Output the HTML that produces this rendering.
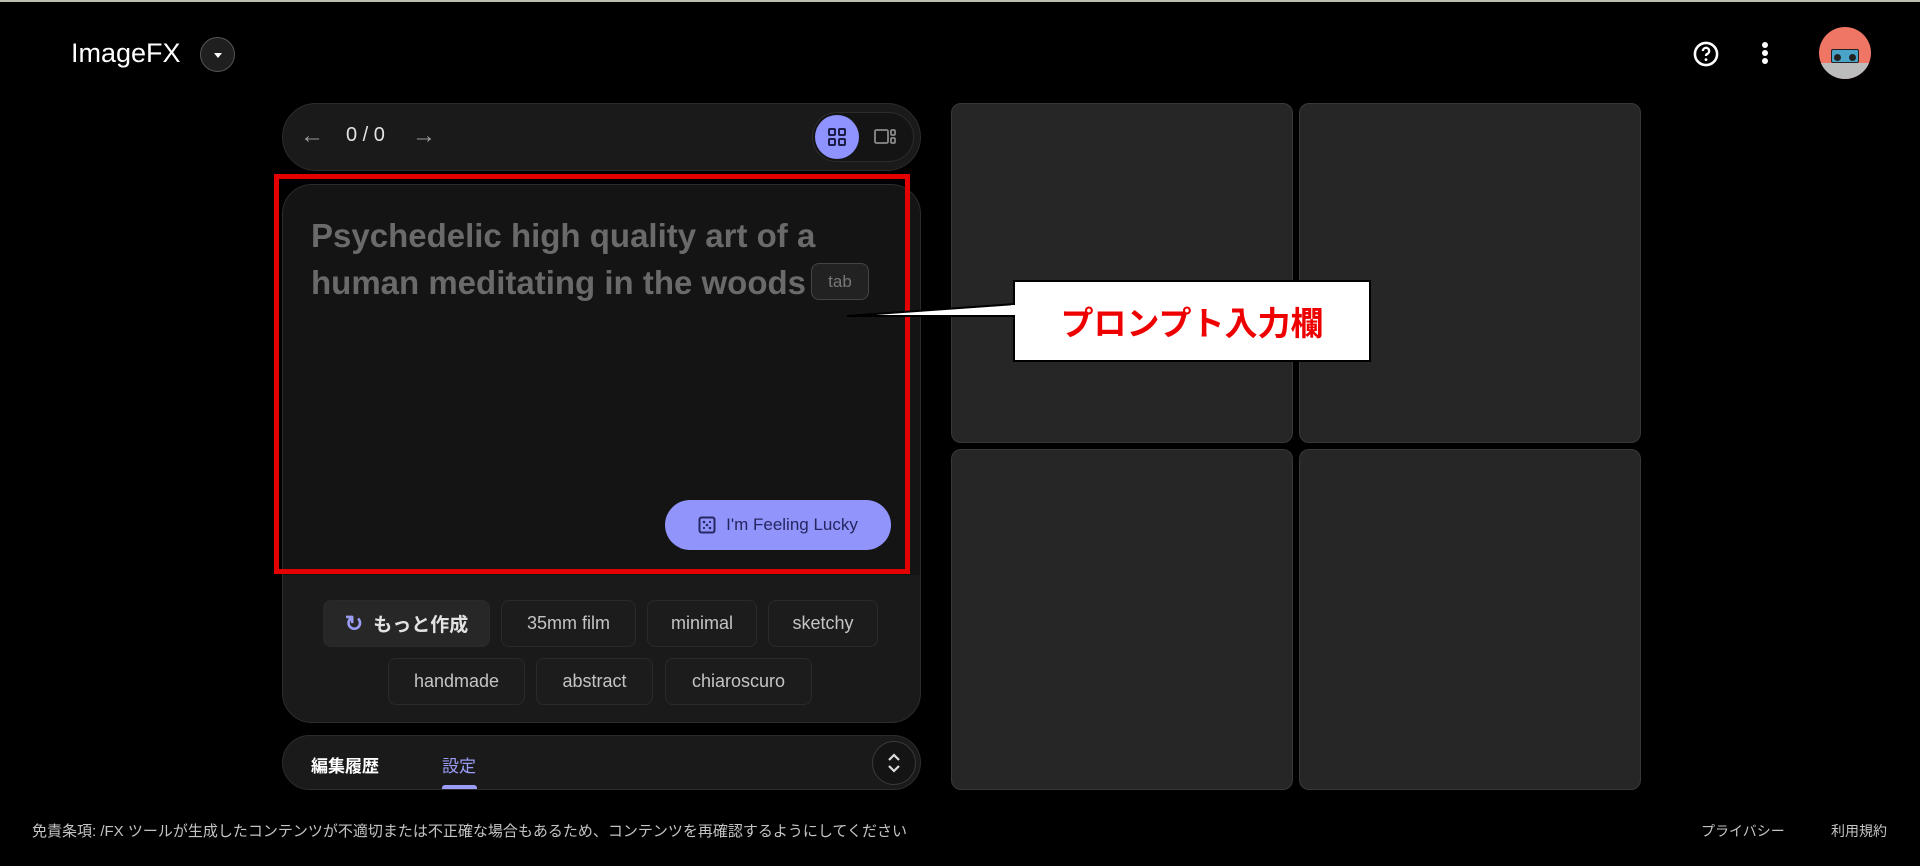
<!DOCTYPE html>
<html><head><meta charset="utf-8"><style>
*{box-sizing:border-box;margin:0;padding:0}
body{width:1920px;height:866px;background:#000;position:relative;overflow:hidden;font-family:"Liberation Sans","Noto Sans CJK JP",sans-serif;color:#e3e3e3}
.a{position:absolute}
.chip{position:absolute;height:47px;border:1px solid #2a2a2a;background:#1c1c1c;border-radius:8px;color:#c4c4c4;font-size:18px;display:flex;align-items:center;justify-content:center}
.tile{position:absolute;background:#262626;border:1px solid #383838;border-radius:10px}
</style></head><body>
<div class="a" style="left:0;top:0;width:1920px;height:2px;background:#bdbdb0"></div>
<div class="a" style="left:71px;top:38px;font-size:27px;color:#fff">ImageFX</div>
<div class="a" style="left:200px;top:37px;width:35px;height:35px;border-radius:50%;background:#1f1f1f;border:1px solid #555"><div class="a" style="left:13px;top:15px;border-left:4px solid transparent;border-right:4px solid transparent;border-top:5px solid #fff"></div></div>
<svg class="a" style="left:1692px;top:40px" width="28" height="28" viewBox="0 0 24 24"><circle cx="12" cy="12" r="9.5" fill="none" stroke="#fff" stroke-width="2.2"/><path d="M9.3 9.5a2.7 2.7 0 1 1 3.8 2.4c-.8.4-1.1.9-1.1 1.8" fill="none" stroke="#fff" stroke-width="2"/><circle cx="12" cy="16.8" r="1.2" fill="#fff"/></svg>
<div class="a" style="left:1762px;top:42px;width:6px;height:6px;border-radius:50%;background:#fff;box-shadow:0 8px 0 #fff,0 16px 0 #fff"></div>
<div class="a" style="left:1819px;top:27px;width:52px;height:52px;border-radius:50%;overflow:hidden;background:#ef7565">
<div class="a" style="left:0;top:36px;width:52px;height:16px;background:#bcbcbc"></div>
<div class="a" style="left:12px;top:22px;width:28px;height:14px;background:#4aa3c8;border-radius:2px;border:1px solid #222"></div>
<div class="a" style="left:15px;top:27px;width:7px;height:7px;border-radius:50%;background:#222"></div>
<div class="a" style="left:30px;top:27px;width:7px;height:7px;border-radius:50%;background:#222"></div></div>

<div class="a" style="left:282px;top:103px;width:639px;height:68px;border-radius:34px;background:#1a1a1a;border:1px solid #2c2c2c"></div>
<div class="a" style="left:300px;top:122px;font-size:24px;color:#9a9a9a">←</div>
<div class="a" style="left:346px;top:124px;font-size:20px;color:#e3e3e3">0 / 0</div>
<div class="a" style="left:412px;top:122px;font-size:24px;color:#9a9a9a">→</div>
<div class="a" style="left:812px;top:112px;width:102px;height:50px;border-radius:25px;border:1px solid #2c2c2c;background:#141414"></div>
<div class="a" style="left:815px;top:115px;width:44px;height:44px;border-radius:50%;background:#8e93ff"></div>
<svg class="a" style="left:826px;top:126px" width="22" height="22" viewBox="0 0 22 22" fill="none" stroke="#1d1d4a" stroke-width="2"><rect x="3" y="3" width="6" height="6" rx="1"/><rect x="13" y="3" width="6" height="6" rx="1"/><rect x="3" y="13" width="6" height="6" rx="1"/><rect x="13" y="13" width="6" height="6" rx="1"/></svg>
<svg class="a" style="left:873px;top:127px" width="24" height="20" viewBox="0 0 24 20" fill="none" stroke="#8a8a8a" stroke-width="1.8"><rect x="2" y="3" width="13" height="13" rx="1.5"/><rect x="18" y="3" width="4" height="5" rx="1"/><rect x="18" y="11" width="4" height="5" rx="1"/></svg>

<div class="a" style="left:282px;top:184px;width:639px;height:539px;border-radius:30px;background:#1a1a1a;border:1px solid #2c2c2c;overflow:hidden"><div style="height:390px;background:#141414"></div></div>
<div class="a" style="left:311px;top:212px;font-size:33px;font-weight:bold;color:#6a6a6a;line-height:47px;letter-spacing:0px;white-space:nowrap">Psychedelic high quality art of a<br>human meditating in the woods</div>
<div class="a" style="left:811px;top:263px;width:58px;height:37px;border-radius:8px;border:1px solid #444;background:#222;color:#777;font-size:17px;display:flex;align-items:center;justify-content:center">tab</div>
<div class="a" style="left:665px;top:500px;width:226px;height:50px;border-radius:25px;background:#9094fb;color:#262660;font-size:17px;display:flex;align-items:center;justify-content:center;gap:10px"><svg width="18" height="18" viewBox="0 0 18 18"><rect x="1.5" y="1.5" width="15" height="15" rx="2" fill="none" stroke="#262660" stroke-width="2"/><circle cx="6" cy="6" r="1.3" fill="#262660"/><circle cx="12" cy="12" r="1.3" fill="#262660"/><circle cx="9" cy="9" r="1.3" fill="#262660"/><circle cx="12" cy="6" r="1.1" fill="#262660"/><circle cx="6" cy="12" r="1.1" fill="#262660"/></svg>I'm Feeling Lucky</div>
<div class="a" style="left:274px;top:174px;width:636px;height:400px;border:5px solid #e50000"></div>

<div class="chip" style="left:323px;top:600px;width:167px;background:#272727;color:#e3e3e3;font-weight:bold;font-size:19px;gap:10px"><span style="color:#9a9cf5;font-size:22px">↻</span>もっと作成</div>
<div class="chip" style="left:501px;top:600px;width:135px">35mm film</div>
<div class="chip" style="left:647px;top:600px;width:110px">minimal</div>
<div class="chip" style="left:768px;top:600px;width:110px">sketchy</div>
<div class="chip" style="left:388px;top:658px;width:137px">handmade</div>
<div class="chip" style="left:536px;top:658px;width:117px">abstract</div>
<div class="chip" style="left:665px;top:658px;width:147px">chiaroscuro</div>

<div class="a" style="left:282px;top:735px;width:639px;height:55px;border-radius:28px;background:#1a1a1a;border:1px solid #2c2c2c;overflow:hidden">
<div class="a" style="left:28px;top:16px;font-size:17px;font-weight:bold;color:#fff">編集履歴</div>
<div class="a" style="left:159px;top:16px;font-size:17px;color:#9a9cf5">設定</div>
<div class="a" style="left:159px;top:49px;width:35px;height:6px;border-radius:3px 3px 0 0;background:#9a9cf5"></div>
<div class="a" style="left:589px;top:5px;width:44px;height:44px;border-radius:50%;border:1px solid #3a3a3a;background:#141414"><svg class="a" style="left:13px;top:11px" width="16" height="20" viewBox="0 0 16 20" fill="none" stroke="#ddd" stroke-width="2.2"><path d="M3 7l5-5 5 5M3 13l5 5 5-5"/></svg></div></div>

<div class="tile" style="left:951px;top:103px;width:342px;height:340px"></div>
<div class="tile" style="left:1299px;top:103px;width:342px;height:340px"></div>
<div class="tile" style="left:951px;top:449px;width:342px;height:341px"></div>
<div class="tile" style="left:1299px;top:449px;width:342px;height:341px"></div>

<svg class="a" style="left:840px;top:280px" width="180" height="50"><polygon points="7,36 176,24 176,36" fill="#fff" stroke="#000" stroke-width="2"/></svg>
<div class="a" style="left:1013px;top:280px;width:358px;height:82px;background:#fff;border:2px solid #000;color:#e00;font-size:33px;font-weight:bold;display:flex;align-items:center;justify-content:center">プロンプト入力欄</div>
<div class="a" style="left:1011px;top:305px;width:6px;height:10px;background:#fff"></div>

<div class="a" style="left:32px;top:820px;font-size:15px;color:#c4c4c4">免責条項: /FX ツールが生成したコンテンツが不適切または不正確な場合もあるため、コンテンツを再確認するようにしてください</div>
<div class="a" style="left:1701px;top:821px;font-size:14px;color:#c4c4c4">プライバシー</div>
<div class="a" style="left:1831px;top:821px;font-size:14px;color:#c4c4c4">利用規約</div>
</body></html>
